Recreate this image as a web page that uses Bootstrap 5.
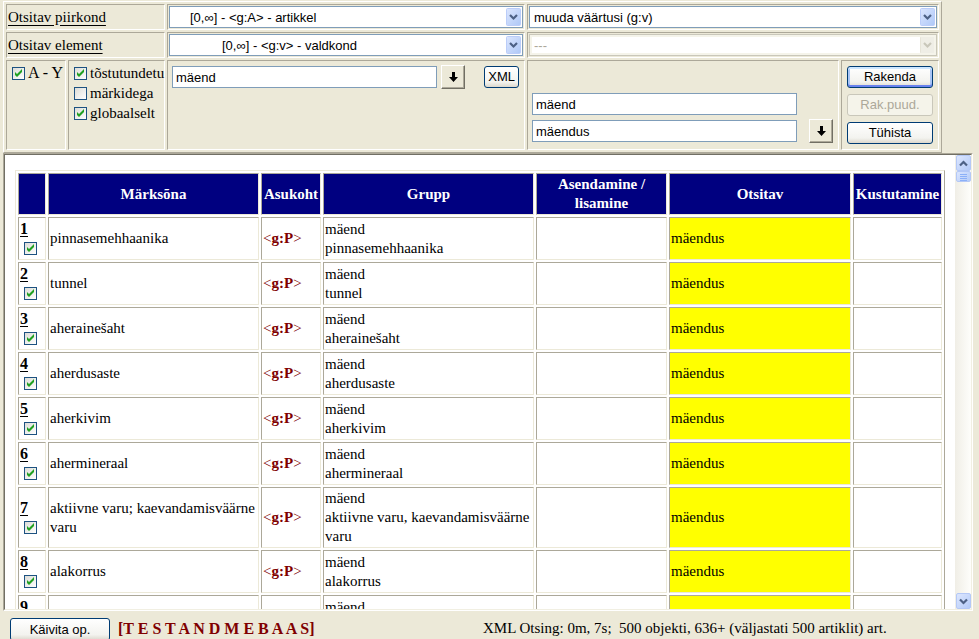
<!DOCTYPE html>
<html lang="et">
<head>
<meta charset="utf-8">
<meta name="viewport" content="width=device-width, initial-scale=1">
<title>XML Otsing</title>
<link rel="stylesheet" href="https://cdn.jsdelivr.net/npm/bootstrap@5.3.0/dist/css/bootstrap.min.css">
<style>
:root { --face:#ece9d8; --shade:#aca899; --dark:#716f64; --field:#7f9db9; --btnline:#003c74; }
body { background:var(--face); color:#000; font:15px/19px "Liberation Serif","Times New Roman",serif; }
input, select, button { font:13px/16px "Liberation Sans",Arial,sans-serif; color:#000; }

.tools { display:grid; grid-template-columns:60px 97px 358px 1fr 98px; gap:2px; margin:1px 37px 0 3px; padding:2px; border:1px solid; border-color:#fff var(--shade) var(--shade) #fff; }
.box { border:1px solid; border-color:var(--shade) #fff #fff var(--shade); padding:1px; min-width:0; }
.span2 { grid-column:span 2; }
.tall { min-height:90px; font-size:16px; }
.opts { padding:2px 0 0 5px; line-height:20px; white-space:nowrap; }
.opts label { gap:3px; }
.lbl { text-decoration:underline; text-underline-offset:3px; text-decoration-thickness:1px; }

.tick { appearance:none; width:13px; height:13px; margin:0; flex:none; border:1px solid #1d5281; background:linear-gradient(135deg,#dcdcd7,#fff); }
.tick:checked { background:url("data:image/svg+xml,%3Csvg xmlns='http://www.w3.org/2000/svg' viewBox='0 0 11 11'%3E%3Cpath d='M2 4v3l2 2 5-5V1L4 6z' fill='%2321a121'/%3E%3C/svg%3E") center/11px 11px no-repeat, linear-gradient(135deg,#dcdcd7,#fff); }

.pick { appearance:none; display:block; width:100%; height:22px; border:1px solid var(--field); border-radius:0; padding:1px 20px 0 4px; opacity:1;
  background:#fff url("data:image/svg+xml,%3Csvg xmlns='http://www.w3.org/2000/svg' width='15' height='18'%3E%3Cdefs%3E%3ClinearGradient id='g' x2='1' y2='1'%3E%3Cstop stop-color='%23dce6fe'/%3E%3Cstop offset='1' stop-color='%23aec8f7'/%3E%3C/linearGradient%3E%3C/defs%3E%3Crect x='.5' y='.5' width='14' height='17' rx='1' fill='url(%23g)' stroke='%23bbcdf9'/%3E%3Cpath d='M4 7l3.500 3.500L11 7' fill='none' stroke='%234d6185' stroke-width='2.200'/%3E%3C/svg%3E") right 1px center no-repeat; }
.pick:disabled { color:var(--shade); border-color:#c9c7ba; box-shadow:inset 0 0 0 2px #f5f4ea;
  background-image:url("data:image/svg+xml,%3Csvg xmlns='http://www.w3.org/2000/svg' width='15' height='18'%3E%3Crect x='.5' y='.5' width='14' height='17' rx='1' fill='%23efeee6' stroke='%23e6e4d8'/%3E%3Cpath d='M4 7l3.500 3.500L11 7' fill='none' stroke='%23c9c7ba' stroke-width='2.200'/%3E%3C/svg%3E"); }
.in1 { padding-left:20px; }
.in2 { padding-left:52px; }

.txt { width:265px; height:22px; border:1px solid var(--field); padding:0 3px; background:#fff; }
.drop { width:24px; height:24px; padding:0; border:1px solid; border-color:#fff var(--dark) var(--dark) #fff; box-shadow:inset -1px -1px var(--shade); background:var(--face); display:flex; align-items:center; justify-content:center; }
.push { height:22px; padding:0 3px; border:1px solid var(--btnline); border-radius:3px; background:linear-gradient(#fff,#f3f3ef 75%,#dcd8cd); }
.push.main { box-shadow:inset 0 2px #cee7ff, inset 0 -2px #6982ee, inset 2px 0 #a9c5f5, inset -2px 0 #a9c5f5; }
.push:disabled { color:var(--shade); border-color:#c9c7ba; background:#f5f4ea; }
.find { padding:4px 5px 6px 4px; }
.acts { padding:5px; gap:6px; }

.pane { margin:0 6px 0 3px; border:1px solid; border-color:var(--shade) #fff #fff var(--shade); min-height:0; }
.pane-in { border:1px solid; border-color:var(--dark) #f1efe2 #f1efe2 var(--dark); background:#fff; min-height:0; }
.view { overflow:hidden; padding:15px 10px 0 10px; min-width:0; }
.hits { width:100%; table-layout:fixed; border-collapse:separate; border-spacing:2px; border:1px solid; border-color:var(--face) var(--shade) var(--shade) var(--face); }
.hits th, .hits td { border:1px solid; border-color:var(--shade) var(--face) var(--face) var(--shade); padding:1px; vertical-align:middle; }
.hits th { background:#000080; color:#fff; text-align:center; }
.hits td:nth-child(3) { color:#800000; font-weight:bold; }
.hits td:nth-child(3) span { font-weight:normal; }
.hits td:nth-child(6) { background:#ff0; }
.hits a { color:#000; font-size:16px; font-weight:bold; display:block; text-underline-offset:2px; }
.hits .tick { display:block; margin:4px 0 3px 4px; }
.c1 { width:28px; } .c2 { width:211px; } .c3 { width:60px; } .c5 { width:131px; } .c6 { width:182px; } .c7 { width:89px; }

.bar { width:16px; background:linear-gradient(90deg,#f0eee6,#fefefb); }
.bar button { width:15px; height:16px; padding:0; border:1px solid #b4c8f6; border-radius:2px; background:linear-gradient(135deg,#dce6fe,#b4cbf8); display:flex; align-items:center; justify-content:center; }
.bar .grip { height:11px; }
.foot { height:28px; padding:7px 0 0 10px; overflow:hidden; }
.foot .push { width:100px; height:23px; }
.db { color:#800000; font-size:16px; font-weight:bold; margin-left:8px; width:365px; }
.foot span { line-height:21px; white-space:pre; }
</style>
<script src="https://cdn.jsdelivr.net/npm/bootstrap@5.3.0/dist/js/bootstrap.bundle.min.js"></script>
</head>
<body class="d-flex flex-column vh-100 overflow-hidden">
<form class="tools">
  <div class="box span2 d-flex align-items-center"><label class="lbl" for="area">Otsitav piirkond</label></div>
  <div class="box"><select id="area" class="pick in1"><option>[0,∞] - &lt;g:A&gt; - artikkel</option></select></div>
  <div class="box span2"><select class="pick" aria-label="Tegevus"><option>muuda väärtusi (g:v)</option></select></div>

  <div class="box span2 d-flex align-items-center"><label class="lbl" for="elem">Otsitav element</label></div>
  <div class="box"><select id="elem" class="pick in2"><option>[0,∞] - &lt;g:v&gt; - valdkond</option></select></div>
  <div class="box span2"><select class="pick" aria-label="Väärtus" disabled><option>---</option></select></div>

  <div class="box tall opts">
    <label class="d-flex align-items-center"><input type="checkbox" class="tick" checked>A - Y</label>
  </div>
  <div class="box opts">
    <label class="d-flex align-items-center"><input type="checkbox" class="tick" checked>tõstutundetu</label>
    <label class="d-flex align-items-center"><input type="checkbox" class="tick">märkidega</label>
    <label class="d-flex align-items-center"><input type="checkbox" class="tick" checked>globaalselt</label>
  </div>
  <div class="box find d-flex align-items-start">
    <div class="d-flex align-items-center w-100 gap-1">
      <input class="txt" type="text" value="mäend" aria-label="Otsitav">
      <button type="button" class="drop" aria-label="Vali"><svg width="9" height="10"><path d="M3 0h3v5h3L4.500 10 0 5h3z"/></svg></button>
      <button type="button" class="push ms-auto">XML</button>
    </div>
  </div>
  <div class="box find d-flex flex-column justify-content-end gap-1">
    <input class="txt" type="text" value="mäend" aria-label="Vana väärtus">
    <div class="d-flex align-items-center justify-content-between">
      <input class="txt" type="text" value="mäendus" aria-label="Uus väärtus">
      <button type="button" class="drop" aria-label="Vali"><svg width="9" height="10"><path d="M3 0h3v5h3L4.500 10 0 5h3z"/></svg></button>
    </div>
  </div>
  <div class="box acts d-flex flex-column">
    <button type="button" class="push main">Rakenda</button>
    <button type="button" class="push" disabled>Rak.puud.</button>
    <button type="button" class="push">Tühista</button>
  </div>
</form>

<main class="pane flex-fill d-flex">
  <div class="pane-in flex-fill d-flex">
    <div class="view flex-fill">
      <table class="hits">
        <colgroup><col class="c1"><col class="c2"><col class="c3"><col class="c2"><col class="c5"><col class="c6"><col class="c7"></colgroup>
        <thead><tr><th></th><th>Märksõna</th><th>Asukoht</th><th>Grupp</th><th>Asendamine / lisamine</th><th>Otsitav</th><th>Kustutamine</th></tr></thead>
        <tbody>
          <tr><td><a href="#1">1</a><input type="checkbox" class="tick" aria-label="1" checked></td><td>pinnasemehhaanika</td><td><span>&lt;</span>g:P<span>&gt;</span></td><td>mäend<br>pinnasemehhaanika</td><td></td><td>mäendus</td><td></td></tr>
          <tr><td><a href="#2">2</a><input type="checkbox" class="tick" aria-label="2" checked></td><td>tunnel</td><td><span>&lt;</span>g:P<span>&gt;</span></td><td>mäend<br>tunnel</td><td></td><td>mäendus</td><td></td></tr>
          <tr><td><a href="#3">3</a><input type="checkbox" class="tick" aria-label="3" checked></td><td>aherainešaht</td><td><span>&lt;</span>g:P<span>&gt;</span></td><td>mäend<br>aherainešaht</td><td></td><td>mäendus</td><td></td></tr>
          <tr><td><a href="#4">4</a><input type="checkbox" class="tick" aria-label="4" checked></td><td>aherdusaste</td><td><span>&lt;</span>g:P<span>&gt;</span></td><td>mäend<br>aherdusaste</td><td></td><td>mäendus</td><td></td></tr>
          <tr><td><a href="#5">5</a><input type="checkbox" class="tick" aria-label="5" checked></td><td>aherkivim</td><td><span>&lt;</span>g:P<span>&gt;</span></td><td>mäend<br>aherkivim</td><td></td><td>mäendus</td><td></td></tr>
          <tr><td><a href="#6">6</a><input type="checkbox" class="tick" aria-label="6" checked></td><td>ahermineraal</td><td><span>&lt;</span>g:P<span>&gt;</span></td><td>mäend<br>ahermineraal</td><td></td><td>mäendus</td><td></td></tr>
          <tr><td><a href="#7">7</a><input type="checkbox" class="tick" aria-label="7" checked></td><td>aktiivne varu; kaevandamisväärne varu</td><td><span>&lt;</span>g:P<span>&gt;</span></td><td>mäend<br>aktiivne varu, kaevandamisväärne varu</td><td></td><td>mäendus</td><td></td></tr>
          <tr><td><a href="#8">8</a><input type="checkbox" class="tick" aria-label="8" checked></td><td>alakorrus</td><td><span>&lt;</span>g:P<span>&gt;</span></td><td>mäend<br>alakorrus</td><td></td><td>mäendus</td><td></td></tr>
          <tr><td><a href="#9">9</a><input type="checkbox" class="tick" aria-label="9" checked></td><td></td><td></td><td>mäend<br>&nbsp;</td><td></td><td></td><td></td></tr>
        </tbody>
      </table>
    </div>
    <div class="bar d-flex flex-column align-items-center flex-shrink-0">
      <button type="button" aria-label="Üles"><svg width="9" height="7"><path d="M1 5.500l3.500-3.500L8 5.500" fill="none" stroke="#4d6185" stroke-width="2.200"/></svg></button>
      <button type="button" class="grip" aria-label="Kerimine"><svg width="7" height="8"><path d="M0 1.500h7M0 3.500h7M0 5.500h7M0 7.500h7" stroke="#8cb0f8"/></svg></button>
      <button type="button" class="mt-auto" aria-label="Alla"><svg width="9" height="7"><path d="M1 1.500l3.500 3.500L8 1.500" fill="none" stroke="#4d6185" stroke-width="2.200"/></svg></button>
    </div>
  </div>
</main>

<footer class="foot d-flex flex-shrink-0">
  <button type="button" class="push">Käivita op.</button>
  <span class="db">[T E S T A N D M E B A A S]</span>
  <span>XML Otsing: 0m, 7s;  500 objekti, 636+ (väljastati 500 artiklit) art.</span>
</footer>
</body>
</html>
